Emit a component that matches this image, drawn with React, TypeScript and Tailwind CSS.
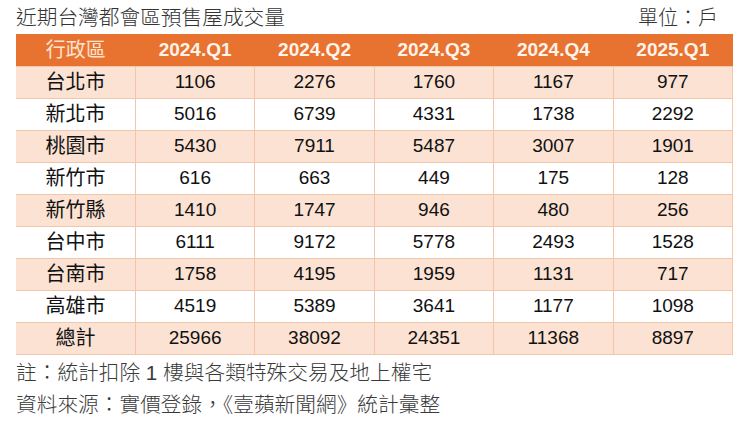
const HEAD = ["行政區", "2024.Q1", "2024.Q2", "2024.Q3", "2024.Q4", "2025.Q1"];

const ROWS: [string, number[]][] = [
  ["台北市", [1106, 2276, 1760, 1167, 977]],
  ["新北市", [5016, 6739, 4331, 1738, 2292]],
  ["桃園市", [5430, 7911, 5487, 3007, 1901]],
  ["新竹市", [616, 663, 449, 175, 128]],
  ["新竹縣", [1410, 1747, 946, 480, 256]],
  ["台中市", [6111, 9172, 5778, 2493, 1528]],
  ["台南市", [1758, 4195, 1959, 1131, 717]],
  ["高雄市", [4519, 5389, 3641, 1177, 1098]],
  ["總計", [25966, 38092, 24351, 11368, 8897]],
];

export default function App() {
  return (
    <div
      className="w-[750px] h-[426px] bg-white text-[#222] overflow-hidden"
      style={{ fontFamily: '"Liberation Sans", "Noto Sans CJK TC", sans-serif' }}
    >
      <div className="flex items-end justify-between pl-4 pr-[32px] h-[34px] pb-[2px]">
        <span className="text-[20.7px] leading-[28px] font-light text-[#333]">近期台灣都會區預售屋成交量</span>
        <span className="text-[20px] leading-[28px] font-light text-[#333]">單位：戶</span>
      </div>

      <table className="ml-4 w-[717px] border-collapse table-fixed">
        <thead>
          <tr className="bg-[#e8722f] h-[32px]">
            {HEAD.map((h, i) => (
              <th
                key={h}
                className={`p-0 text-center ${
                  i === 0 ? "text-[#fde3d0] font-normal text-[20px]" : "text-[#fff4ec] font-bold text-[19px]"
                }`}
              >
                {h}
              </th>
            ))}
          </tr>
        </thead>
        <tbody>
          {ROWS.map(([name, vals], r) => (
            <tr key={name} className={`h-[32px] ${r % 2 === 0 ? "bg-[#fbe2d3]" : "bg-white"}`}>
              <td className="p-0 text-center text-[20px] font-normal text-[#111] border border-[#f1c6ab] border-l-0">
                {name}
              </td>
              {vals.map((v, c) => (
                <td key={c} className="p-0 text-center text-[19px] text-[#111] border border-[#f1c6ab]">
                  {v}
                </td>
              ))}
            </tr>
          ))}
        </tbody>
      </table>

      <div className="pl-4 pt-[2px] text-[20.7px] font-light text-[#3a3a3a]">
        <div className="leading-[32px]">註：統計扣除 1 樓與各類特殊交易及地上權宅</div>
        <div className="leading-[32px]">資料來源：實價登錄，《壹蘋新聞網》統計彙整</div>
      </div>
    </div>
  );
}
